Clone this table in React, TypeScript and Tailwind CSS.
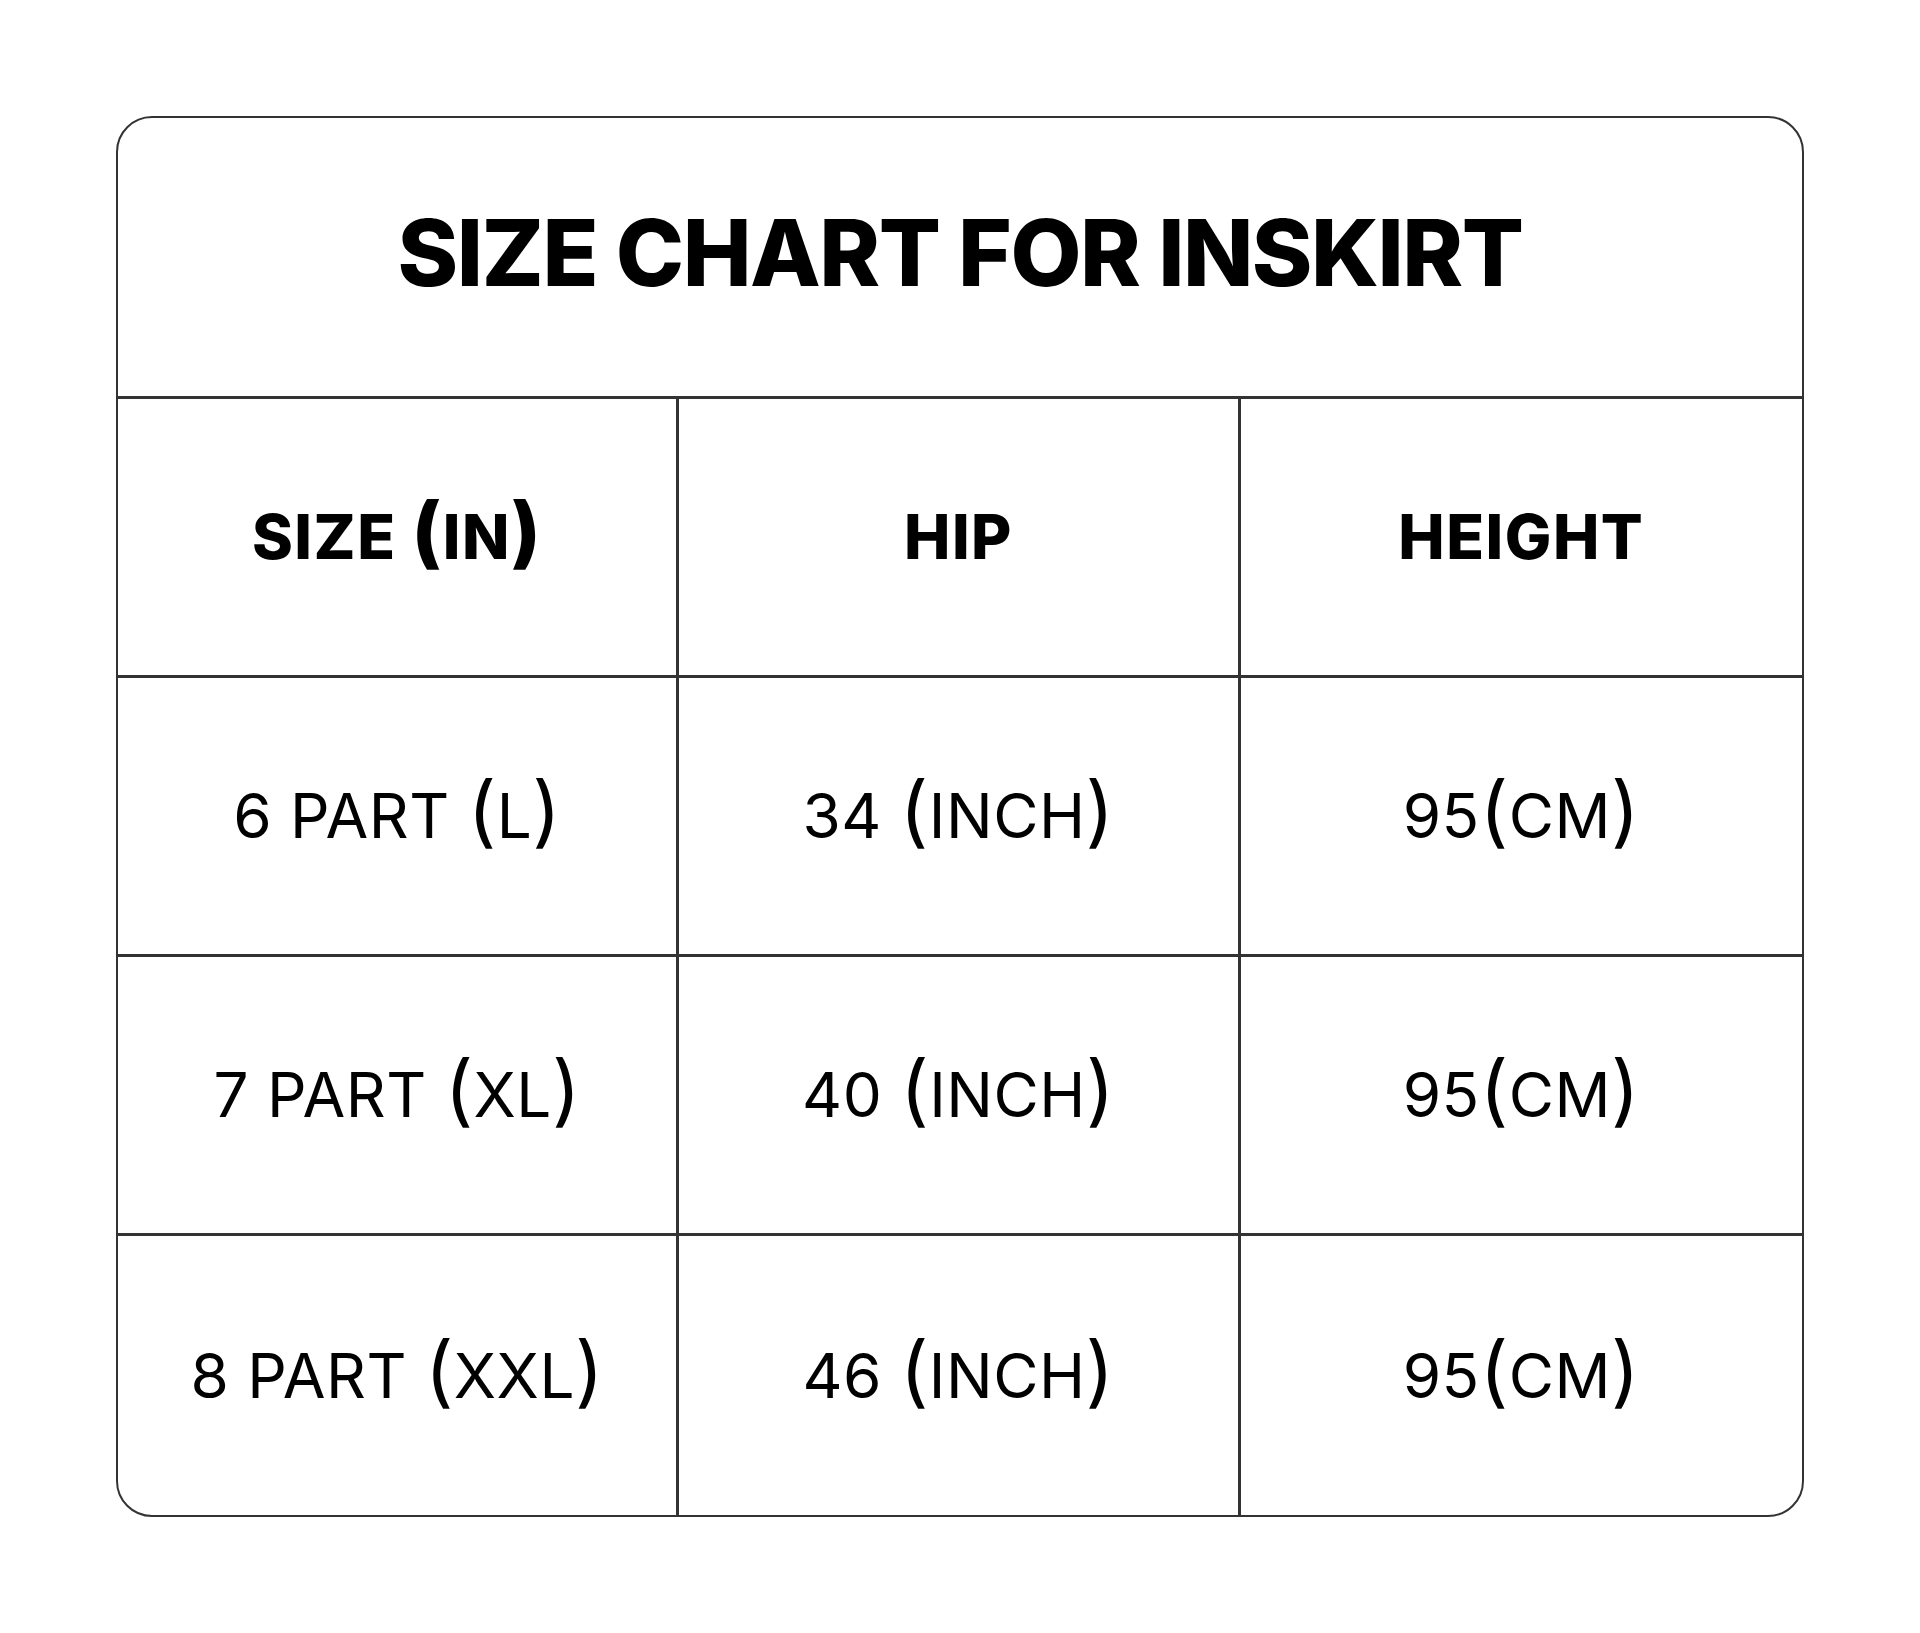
const rows = [
  ['SIZE (IN)', 'HIP', 'HEIGHT'],
  ['6 PART (L)', '34 (INCH)', '95(CM)'],
  ['7 PART (XL)', '40 (INCH)', '95(CM)'],
  ['8 PART (XXL)', '46 (INCH)', '95(CM)'],
];

// parens are drawn taller than the caps in the chart, so they get their own size
const CellText = ({ text }: { text: string }) => {
  const parts = text.split(/([()])/).filter(Boolean);
  return (
    <span className="whitespace-pre leading-none">
      {parts.map((p, i) =>
        p === '(' || p === ')' ? (
          <span key={i} className="text-[78px] leading-[0]">
            {p}
          </span>
        ) : (
          <span key={i}>{p}</span>
        ),
      )}
    </span>
  );
};

export default function App() {
  return (
    <div className="flex min-h-screen w-full justify-center bg-white pt-[116px] font-['Inter','Liberation_Sans',sans-serif] text-black">
      <div className="h-fit w-[1688px] overflow-hidden rounded-[36px] border-2 border-[#333]">
        <div className="flex h-[281px] items-center justify-center border-b-[3px] border-[#333] pb-2">
          <h1 className="text-[92px] font-extrabold leading-none tracking-[-1.5px]">
            SIZE CHART FOR INSKIRT
          </h1>
        </div>
        <div className="grid grid-cols-3">
          {rows.map((row, r) =>
            row.map((cell, c) => (
              <div
                key={`${r}-${c}`}
                className={[
                  'flex h-[279px] items-center justify-center border-[#333] text-[62px] leading-none',
                  r === 0
                    ? 'font-extrabold tracking-[1.5px]'
                    : 'font-normal tracking-[0.5px]',
                  c < 2 ? 'border-r-[3px]' : '',
                  r < rows.length - 1 ? 'border-b-[3px]' : '',
                ].join(' ')}
              >
                <CellText text={cell} />
              </div>
            )),
          )}
        </div>
      </div>
    </div>
  );
}
